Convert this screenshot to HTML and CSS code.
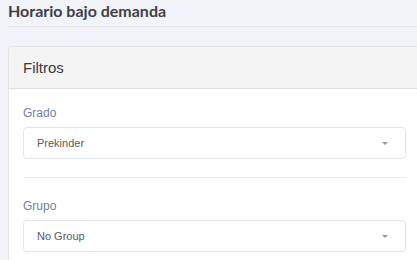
FILE: index.html
```
<!DOCTYPE html>
<html lang="es">
<head>
	<meta charset="UTF-8">
	<title>Horario bajo demanda</title>
	<link rel="stylesheet" href="styles.css">
</head>
<body>
<div class="page">
  <h1 class="page-title">Horario bajo demanda</h1>

  <div class="card">
    <div class="card-head">Filtros</div>
    <div class="card-body">
      <div class="field">
        <label class="field-label">Grado</label>
        <div class="select">
          <span>Prekinder</span>
          <i class="caret"></i>
        </div>
      </div>
      <div class="divider"></div>
      <div class="field">
        <label class="field-label">Grupo</label>
        <div class="select">
          <span>No Group</span>
          <i class="caret"></i>
        </div>
      </div>
    </div>
  </div>
</div>
</body>
</html>
```

FILE: styles.css
```
	html, body{
	  margin: 0;
	  height: 100%;
	  overflow: hidden;
	  background: #f2f3f8;
	}

	.page {
	  width: 413px;
	  padding-left: 8px;
	  font-family: "Liberation Sans", Arial, sans-serif;
	}

	/*页面标题*/
	.page-title {
	  margin: 0;
	  padding: 1px 0 6px;
	  height: 19px;
	  line-height: 19px;
	  font-family: Lato, sans-serif;
	  font-size: 16px;
	  font-weight: 700;
	  color: #3f4047;
	  border-bottom: 1px solid #e3e4ea;
	}

	.card {
	  margin-top: 19px;
	  background: #fff;
	  border: 1px solid #e2e2e5;
	  border-radius: 4px 4px 0 0;
	}

	.card-head {
	  height: 41px;
	  line-height: 41px;
	  padding-left: 14px;
	  font-size: 15px;
	  color: #3a3a3a;
	  background: #f4f4f4;
	  border-bottom: 1px solid #e0e0e0;
	  border-radius: 4px 4px 0 0;
	}

	.card-body {
	  padding: 15px 14px 8px 14px;
	}

	.field-label {
	  display: block;
	  line-height: 18px;
	  margin-bottom: 5px;
	  font-size: 12px;
	  color: #717f9b;
	}

	.select {
	  display: flex;
	  align-items: center;
	  justify-content: space-between;
	  height: 30px;
	  padding: 0 17px 0 13px;
	  border: 1px solid #e2e5ec;
	  border-radius: 4px;
	  font-size: 11px;
	  color: #575962;
	}

	.caret {
	  width: 0;
	  height: 0;
	  border-left: 3px solid transparent;
	  border-right: 3px solid transparent;
	  border-top: 3px solid #999;
	}

	.divider {
	  height: 1px;
	  margin: 18px 0 19px;
	  background: #ebedf2;
	}
```
